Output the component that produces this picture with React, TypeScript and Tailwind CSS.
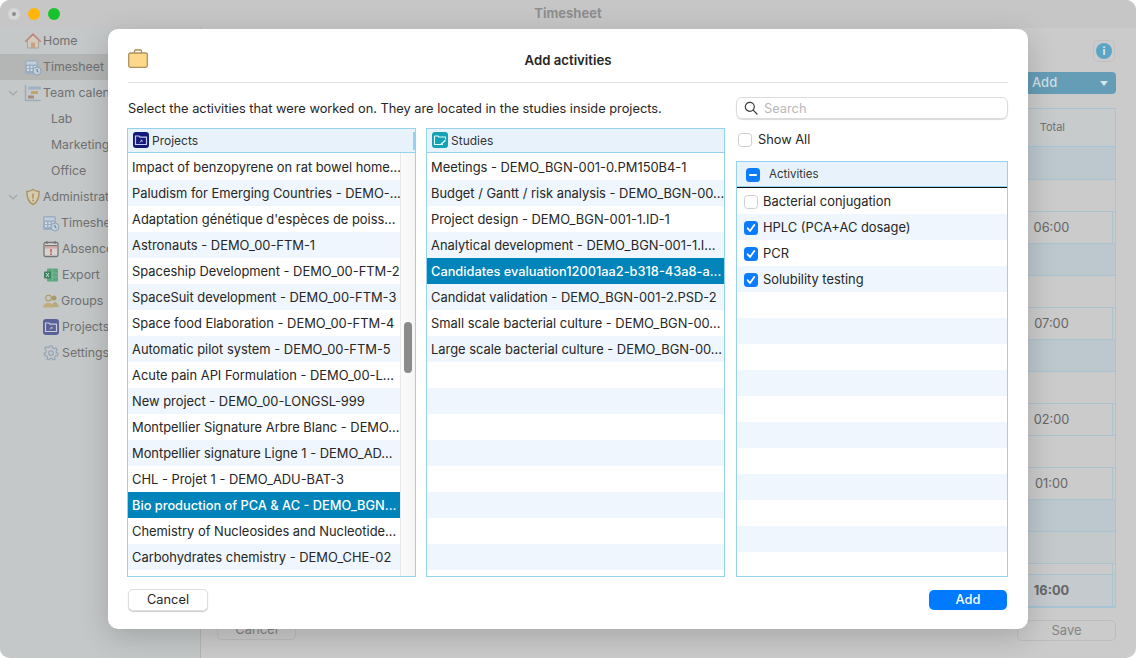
import React from "react";

const FONT = "[font-family:Inter,'Liberation_Sans',sans-serif]";

function Home() {
  return (
    <svg width="18" height="18" viewBox="0 0 18 18">
      <path d="M3.500 8V16h11V8L9 3Z" fill="#d3cabc" stroke="#aaa49a" />
      <path d="M1.200 9.800 9 2.200l7.800 7.600" fill="none" stroke="#c0877d" strokeWidth="1.600" />
      <rect x="7" y="10.500" width="4" height="5.500" fill="#c6a184" />
    </svg>
  );
}
function Calc() {
  return (
    <svg width="18" height="18" viewBox="0 0 18 18">
      <rect x="1" y="2" width="13" height="14" rx="1.500" fill="#9bafc4" />
      <rect x="2.500" y="3.500" width="10" height="3" fill="#c2ced9" />
      <path d="M3 9h2M6.500 9h2M10 9h2M3 12h2M6.500 12h2" stroke="#e2e7ec" strokeWidth="1.400" />
      <circle cx="13" cy="13" r="4" fill="#c2cfd8" stroke="#8ea3ba" />
      <path d="M13 11v2.200l1.500.8" stroke="#66798c" fill="none" />
    </svg>
  );
}
function Gantt() {
  return (
    <svg width="18" height="18" viewBox="0 0 18 18">
      <path d="M1.500 1v16M1.500 16.500h15" stroke="#97abbd" strokeWidth="1.400" />
      <rect x="4" y="2.500" width="13" height="3" fill="#9fb1c2" />
      <rect x="7" y="7" width="7" height="3" fill="#bfa56e" />
      <rect x="4" y="11.500" width="6" height="3" fill="#a58c7c" />
    </svg>
  );
}
function Shield() {
  return (
    <svg width="18" height="18" viewBox="0 0 18 18">
      <path d="M9 1.500c2 1.400 4 2 6 2 .3 6-1 10.500-6 13-5-2.500-6.300-7-6-13 2 0 4-.6 6-2Z" fill="#d6cbb0" stroke="#a8935f" strokeWidth="1.400" />
      <path d="M9 5.500v5" stroke="#a8935f" strokeWidth="1.500" />
      <circle cx="9" cy="12.500" r=".9" fill="#a8935f" />
    </svg>
  );
}
function Cal() {
  return (
    <svg width="16" height="18" viewBox="0 0 16 18">
      <rect x="1" y="2.500" width="14" height="14" rx="1.500" fill="#d6d3d0" stroke="#757575" strokeWidth="1.300" />
      <rect x="2" y="5" width="12" height="1.500" fill="#757575" />
      <rect x="2" y="6.500" width="12" height="2" fill="#d9a9a4" />
      <path d="M4 1v3M12 1v3" stroke="#757575" strokeWidth="1.300" />
      <path d="M8 9v3.500" stroke="#c05a52" strokeWidth="1.500" />
      <circle cx="8" cy="14.200" r=".9" fill="#c05a52" />
    </svg>
  );
}
function Excel() {
  return (
    <svg width="16" height="16" viewBox="0 0 16 16">
      <rect x="4" y="1.500" width="11" height="13" rx="1" fill="#5da881" />
      <path d="M9.500 1.500V14.500M4 6h11M4 10h11" stroke="#7fb99a" strokeWidth=".7" />
      <rect x="1" y="4.500" width="7" height="7" rx=".8" fill="#3c8460" />
      <path d="m3 6 3 4M6 6l-3 4" stroke="#d8e4dc" strokeWidth=".9" />
    </svg>
  );
}
function Groups() {
  return (
    <svg width="18" height="16" viewBox="0 0 18 16">
      <circle cx="12" cy="5" r="2.500" fill="#a99a6e" />
      <path d="M10 14c.3-2.800 1-5 2.500-5s4 1.500 4.300 5Z" fill="#b7a97e" />
      <circle cx="6.500" cy="5" r="2.800" fill="none" stroke="#b29a60" strokeWidth="1.100" />
      <path d="M1 14.500c.2-3 2.200-4.500 5.500-4.500S11.800 11.500 12 14.500Z" fill="#c2ab74" />
    </svg>
  );
}
function ProjIcon({ bg, fg }: { bg: string; fg: string }) {
  return (
    <svg width="16" height="16" viewBox="0 0 16 16">
      <rect width="16" height="16" rx="3" fill={bg} />
      <path d="M2.500 4h3.500l1 1.200h6.500v7.300h-11Z" fill="none" stroke={fg} strokeWidth="1.200" />
      <path d="m6.500 10.500 2.500-2M7.500 8.300H9.200v1.600" stroke={fg} strokeWidth=".8" fill="none" />
    </svg>
  );
}
function StudyIcon() {
  return (
    <svg width="16" height="16" viewBox="0 0 16 16">
      <rect width="16" height="16" rx="3" fill="#13a3b5" />
      <path d="M2.500 4h3.500l1 1h6.500v2.500M11 12.500H2.500V4" fill="none" stroke="#e8fbfd" strokeWidth="1.100" />
      <path d="m9 12.300 4.500-4" stroke="#e8fbfd" strokeWidth="1.400" />
    </svg>
  );
}
function Gear() {
  return (
    <svg width="16" height="16" viewBox="0 0 16 16" fill="none" stroke="#90a3b3" strokeWidth="1.100">
      <path d="M6.800 1h2.400l.4 2 1.500.7 1.800-1 1.400 1.900-1.300 1.500.3 1.500 1.700.8-.5 2.200-2 .1-.9 1.300.6 1.900-2.100 1-1.200-1.500h-1.600l-1.200 1.500-2.100-1 .6-1.900-.9-1.300-2-.1-.5-2.200 1.700-.8.3-1.500L1.700 3.600l1.400-1.900 1.800 1 1.500-.7Z" />
      <circle cx="8" cy="8" r="2.300" />
    </svg>
  );
}
function Chev() {
  return (
    <svg width="10" height="6" viewBox="0 0 10 6" fill="none" stroke="#a3a6a6" strokeWidth="1.200">
      <path d="m1 1 4 4 4-4" />
    </svg>
  );
}

type Side = { label: string; icon?: React.ReactNode; indent: number; chev?: boolean; sel?: boolean };
const sideItems: Side[] = [
  { label: "Home", icon: <Home />, indent: 24 },
  { label: "Timesheet", icon: <Calc />, indent: 24, sel: true },
  { label: "Team calendar", icon: <Gantt />, indent: 24, chev: true },
  { label: "Lab", indent: 51 },
  { label: "Marketing", indent: 51 },
  { label: "Office", indent: 51 },
  { label: "Administration", icon: <Shield />, indent: 24, chev: true },
  { label: "Timesheet", icon: <Calc />, indent: 42 },
  { label: "Absences", icon: <Cal />, indent: 43 },
  { label: "Export", icon: <Excel />, indent: 43 },
  { label: "Groups", icon: <Groups />, indent: 42 },
  { label: "Projects", icon: <ProjIcon bg="#5a6098" fg="#c9cbd8" />, indent: 43 },
  { label: "Settings", icon: <Gear />, indent: 43 },
];

function Sidebar() {
  return (
    <div className="w-[201px] shrink-0 bg-[#c5c8c8] border-r border-[#b5b5b5] flex flex-col">
      {sideItems.map((s, i) => (
        <div
          key={i}
          className={`relative h-[26px] flex items-center text-[12.300px] text-[#6f7172] ${s.sel ? "bg-[#b4b5b5]" : ""}`}
          style={{ paddingLeft: s.indent }}
        >
          {s.chev && (
            <span className="absolute left-[8px] top-[10px] flex">
              <Chev />
            </span>
          )}
          {s.icon && <span className="w-[19px] shrink-0 flex items-center justify-start">{s.icon}</span>}
          <span className="whitespace-nowrap">{s.label}</span>
        </div>
      ))}
    </div>
  );
}

type TRow = { h: number; tint?: boolean; soft?: boolean; val?: string; bold?: boolean; total?: boolean };
const tableRows: TRow[] = [
  { h: 33, tint: true },
  { h: 32 },
  { h: 32, val: "06:00", total: true },
  { h: 32, tint: true },
  { h: 32 },
  { h: 32, val: "07:00", total: true },
  { h: 32, tint: true },
  { h: 32 },
  { h: 32, val: "02:00", total: true },
  { h: 32 },
  { h: 32, val: "01:00", total: true },
  { h: 32, tint: true },
  { h: 32, soft: true },
  { h: 11, total: true },
  { h: 32, val: "16:00", bold: true, total: true },
];

function Background() {
  return (
    <div className="w-full h-full rounded-[10px] overflow-hidden bg-[#cbcbcb] flex flex-col">
      <div className="h-[28px] shrink-0 bg-[#c6c6c6] flex items-center justify-center relative">
        <div className="absolute left-[8px] top-[8px] flex gap-[8px]">
          <span className="w-[12px] h-[12px] rounded-full bg-[#d6d6d8] flex items-center justify-center">
            <span className="w-[4px] h-[4px] rounded-full bg-[#8d8d8f]" />
          </span>
          <span className="w-[12px] h-[12px] rounded-full bg-[#ffb507]" />
          <span className="w-[12px] h-[12px] rounded-full bg-[#17c32d]" />
        </div>
        <span className="text-[13px] font-bold text-[#8e8e8e]">Timesheet</span>
      </div>
      <div className="flex-1 flex min-h-0">
        <Sidebar />
        <div className="flex-1 flex flex-col pl-[16px] pr-[20px] min-w-0">
          <div className="h-[44px] shrink-0 flex items-center justify-end pr-[1px] pt-[2px]">
            <span className="w-[22px] h-[22px] rounded-[5px] border border-[#c2c2c2] flex items-center justify-center">
              <span className="w-[16px] h-[16px] rounded-full bg-[#5ba4c6] text-[#d6e8f0] text-[11px] font-bold flex items-center justify-center">i</span>
            </span>
          </div>
          <div className="h-[36px] shrink-0 flex justify-end">
            <div className="w-[160px] h-[22px] rounded-[4px] bg-[#659db6] flex items-center justify-between pl-[76px] pr-[8px] text-[#d0dfe6] text-[13px] font-medium">
              Add
              <span className="w-0 h-0 border-x-[4.500px] border-x-transparent border-t-[5px] border-t-[#d8e6ec]" />
            </div>
          </div>
          <div className="border border-[#a6c5d6] flex flex-col">
            <div className="h-[38px] shrink-0 border-b border-[#a6c5d6] bg-[#c8cbcc] flex items-center justify-end pr-[50px] text-[11px] text-[#6f7172]">
              Total
            </div>
            {tableRows.map((r, i) => (
              <div
                key={i}
                className={`shrink-0 flex items-center justify-end text-[12.800px] text-[#666666] border-b border-[#a9c3d1] ${r.tint ? "bg-[#bcc7ce]" : ""} ${r.soft ? "bg-[#c4c9cb]" : ""} ${r.bold ? "font-bold bg-[#c4cacd]" : ""}`}
                style={{ height: r.h }}
              >
                <div className={`h-full flex items-center justify-center w-[88px] pr-[34px] ${r.total ? "border-r border-[#a9c3d1] mr-[2px]" : ""}`}>
                  {r.val}
                </div>
              </div>
            ))}
          </div>
          <div className="mt-[12px] flex justify-between">
            <div className="w-[79px] h-[20px] rounded-[5px] border border-[#bdbdbd] flex items-center justify-center text-[13px] text-[#858585]">Cancel</div>
            <div className="w-[99px] h-[21px] rounded-[5px] border border-[#bdbdbd] flex items-center justify-center text-[13px] text-[#858585]">Save</div>
          </div>
        </div>
      </div>
    </div>
  );
}

function Check({ on }: { on?: boolean }) {
  return on ? (
    <span className="w-[14px] h-[14px] shrink-0 rounded-[3.500px] bg-[#0b7cff] flex items-center justify-center">
      <svg width="10" height="10" viewBox="0 0 10 10" fill="none" stroke="#fff" strokeWidth="1.800" strokeLinecap="round" strokeLinejoin="round">
        <path d="m1.700 5.300 2.300 2.700 4.300-6" />
      </svg>
    </span>
  ) : (
    <span className="w-[14px] h-[14px] shrink-0 rounded-[3.500px] bg-white border border-[#cfcfcf]" />
  );
}

function Rows({ items, selected, count }: { items: string[]; selected: number; count: number }) {
  return (
    <>
      {Array.from({ length: count }).map((_, i) => (
        <div
          key={i}
          className={`h-[26px] shrink-0 pl-[4px] pt-[2px] flex items-center whitespace-nowrap ${
            i === selected
              ? "bg-[#0084ba] text-white font-medium text-[12.800px]"
              : i % 2
                ? "bg-[#eff6fd] text-[#262626] text-[12.900px]"
                : "bg-white text-[#262626] text-[12.900px]"
          }`}
        >
          {items[i]}
        </div>
      ))}
    </>
  );
}

const projects = [
  "Impact of benzopyrene on rat bowel home...",
  "Paludism for Emerging Countries - DEMO-...",
  "Adaptation génétique d'espèces de poiss...",
  "Astronauts - DEMO_00-FTM-1",
  "Spaceship Development - DEMO_00-FTM-2",
  "SpaceSuit development - DEMO_00-FTM-3",
  "Space food Elaboration - DEMO_00-FTM-4",
  "Automatic pilot system - DEMO_00-FTM-5",
  "Acute pain API Formulation - DEMO_00-L...",
  "New project - DEMO_00-LONGSL-999",
  "Montpellier Signature Arbre Blanc - DEMO...",
  "Montpellier signature Ligne 1 - DEMO_AD...",
  "CHL - Projet 1 - DEMO_ADU-BAT-3",
  "Bio production of PCA & AC - DEMO_BGN...",
  "Chemistry of Nucleosides and Nucleotide...",
  "Carbohydrates chemistry - DEMO_CHE-02",
];
const studies = [
  "Meetings - DEMO_BGN-001-0.PM150B4-1",
  "Budget / Gantt / risk analysis - DEMO_BGN-00...",
  "Project design - DEMO_BGN-001-1.ID-1",
  "Analytical development - DEMO_BGN-001-1.I...",
  "Candidates evaluation12001aa2-b318-43a8-a...",
  "Candidat validation - DEMO_BGN-001-2.PSD-2",
  "Small scale bacterial culture - DEMO_BGN-00...",
  "Large scale bacterial culture - DEMO_BGN-00...",
];
const activities: [string, boolean][] = [
  ["Bacterial conjugation", false],
  ["HPLC (PCA+AC dosage)", true],
  ["PCR", true],
  ["Solubility testing", true],
];

function Modal() {
  return (
    <div className="absolute left-[108px] top-[29px] w-[920px] h-[600px] bg-white rounded-[10px] shadow-[0_8px_30px_rgba(0,0,0,0.18)] px-[20px] flex flex-col">
      <div className="h-[54px] shrink-0 border-b border-[#e2e2e2] relative flex items-center justify-center">
        <svg className="absolute left-0 top-[20px]" width="20" height="19" viewBox="0 0 20 19">
          <path d="M6.500 4V2a1 1 0 0 1 1-1h5a1 1 0 0 1 1 1v2" fill="none" stroke="#a98f5c" strokeWidth="1.300" />
          <rect x=".7" y="4" width="18.600" height="14.300" rx="1.500" fill="#fdd78a" stroke="#ac935f" strokeWidth="1.300" />
        </svg>
        <span className="text-[13.200px] font-semibold text-[#262626] pt-[10px]">Add activities</span>
      </div>
      <div className="flex-1 flex gap-[11px] min-h-0 -ml-[1px]">
        <div className="w-[289px] flex flex-col shrink-0">
          <div className="h-[45px] pt-[7px] shrink-0 flex items-center whitespace-nowrap pl-[1px] text-[12.800px] text-[#262626]">
            Select the activities that were worked on. They are located in the studies inside projects.
          </div>
          <div className="h-[449px] border border-[#95d2ee] flex flex-col overflow-hidden">
            <div className="h-[24px] pb-[2px] shrink-0 bg-[#e8f2fb] border-b border-[#95d2ee] flex items-center gap-[3px] pl-[5px] relative">
              <ProjIcon bg="#12197a" fg="#c8cdf0" />
              <span className="text-[12px] text-[#333333] pt-[2px]">Projects</span>
              <span className="absolute right-0 top-[3px] h-[18px] w-[2px] bg-[#95d2ee]" />
            </div>
            <div className="flex-1 flex min-h-0">
              <div className="w-[272px] flex flex-col overflow-hidden pt-[1px]">
                <Rows items={projects} selected={13} count={16} />
              </div>
              <div className="flex-1 bg-gradient-to-r from-[#fbfbfb] to-[#f5f5f5] border-l border-[#e8e8e8] relative">
                <span className="absolute left-[3px] top-[169px] w-[8px] h-[51px] rounded-full bg-[#8a8a8a]" />
              </div>
            </div>
          </div>
        </div>
        <div className="w-[299px] flex flex-col shrink-0 -ml-[1px]">
          <div className="h-[45px] shrink-0" />
          <div className="h-[449px] border border-[#95d2ee] flex flex-col overflow-hidden">
            <div className="h-[24px] pb-[2px] shrink-0 bg-[#e8f2fb] border-b border-[#95d2ee] flex items-center gap-[3px] pl-[5px]">
              <StudyIcon />
              <span className="text-[12px] text-[#333333] pt-[2px]">Studies</span>
            </div>
            <div className="flex-1 flex flex-col overflow-hidden pt-[1px]">
              <Rows items={studies} selected={4} count={17} />
            </div>
          </div>
        </div>
        <div className="flex-1 flex flex-col min-w-0">
          <div className="h-[68px] shrink-0 pt-[14px]">
            <div className="h-[22px] rounded-[6px] border border-[#dcdcdc] shadow-[0_1px_1px_rgba(0,0,0,0.15)] flex items-center pl-[7px] gap-[6px] text-[12.800px] text-[#b8b8b8]">
              <svg width="14" height="14" viewBox="0 0 14 14" fill="none" stroke="#3a3a3a" strokeWidth="1.200">
                <circle cx="5.800" cy="5.800" r="4.500" />
                <path d="m9.200 9.200 3.800 3.800" strokeLinecap="round" />
              </svg>
              <span className="pt-[2px]">Search</span>
            </div>
            <div className="mt-[11px] ml-[2px] flex items-center gap-[6px] text-[12.800px] text-[#262626]">
              <Check />
              Show All
            </div>
          </div>
          <div className="h-[416px] mt-[10px] border border-[#95d2ee] flex flex-col overflow-hidden">
            <div className="h-[26px] shrink-0 bg-[#e8f2fb] border-b border-b-[#111111] shadow-[inset_0_-1px_0_#95d2ee] flex items-center pl-[9px] gap-[9px] text-[11.500px] text-[#333333]">
              <span className="w-[14px] h-[14px] rounded-[3.500px] bg-[#0b7cff] flex items-center justify-center">
                <span className="w-[8px] h-[2px] bg-white rounded-full" />
              </span>
              Activities
            </div>
            {Array.from({ length: 15 }).map((_, i) => (
              <div
                key={i}
                className={`h-[26px] shrink-0 pt-[2px] flex items-center pl-[7px] gap-[5px] text-[12.900px] text-[#262626] ${i % 2 ? "bg-[#eff6fd]" : "bg-white"}`}
              >
                {activities[i] && (
                  <>
                    <Check on={activities[i][1]} />
                    {activities[i][0]}
                  </>
                )}
              </div>
            ))}
          </div>
        </div>
      </div>
      <div className="h-[52px] shrink-0 flex items-start justify-between pt-[12px] pr-[1px]">
        <div className="w-[80px] h-[22px] rounded-[5px] bg-white border border-[#dedede] shadow-[0_1px_1px_rgba(0,0,0,0.2)] flex items-center justify-center text-[12.800px] text-[#262626]">
          Cancel
        </div>
        <div className="w-[78px] h-[20px] mt-[1px] rounded-[5px] bg-[#007aff] flex items-center justify-center text-[12.800px] font-medium text-white">
          Add
        </div>
      </div>
    </div>
  );
}

export default function App() {
  return (
    <div className={`relative w-[1136px] h-[658px] overflow-hidden bg-white ${FONT}`}>
      <Background />
      <Modal />
    </div>
  );
}
